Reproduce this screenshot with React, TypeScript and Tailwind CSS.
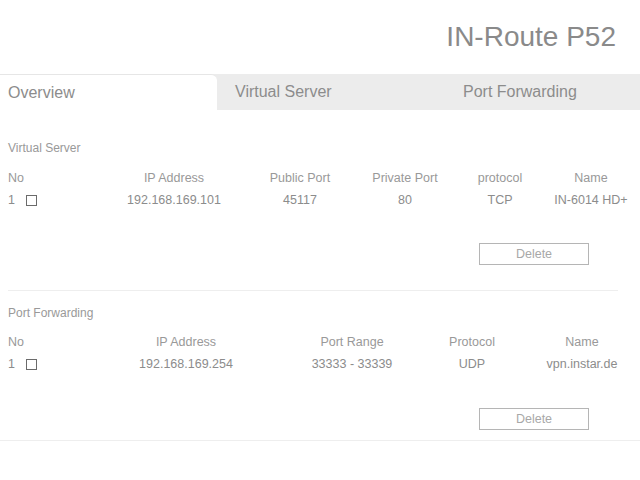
import React from "react"

const vsRows = [
  { no: 1, ip: "192.168.169.101", pub: "45117", priv: "80", proto: "TCP", name: "IN-6014 HD+" },
]

const pfRows = [
  { no: 1, ip: "192.168.169.254", range: "33333 - 33339", proto: "UDP", name: "vpn.instar.de" },
]

const Checkbox = () => (
  <span className="inline-block w-[11px] h-[11px] border border-[#6b6b6b] bg-white" />
)

const DeleteButton = () => (
  <div className="flex justify-end pr-[51px]">
    <button className="w-[110px] h-[22px] border border-[#b5b5b5] bg-white text-[12.5px] text-[#a8a8a8] leading-none">
      Delete
    </button>
  </div>
)

const App = () => {
  const [tab] = React.useState("overview")

  return (
    <div
      className="w-[640px] h-[480px] bg-white text-[#8c8c8c] overflow-hidden"
      style={{ fontFamily: '"Liberation Sans", Arial, sans-serif' }}
    >
      <div className="h-[74px] flex items-center justify-end pr-[24px]">
        <span className="text-[28px] text-[#8a8a8a] leading-none">IN-Route P52</span>
      </div>

      <div className="h-[36px] flex bg-[#ececec] text-[16px]">
        <div
          className={
            "w-[217px] pl-2 flex items-center rounded-tr-[6px] border-t border-[#e6e6e6] " +
            (tab === "overview" ? "bg-white" : "")
          }
        >
          Overview
        </div>
        <div className="w-[228px] pl-[18px] flex items-center">Virtual Server</div>
        <div className="flex-1 pl-[18px] flex items-center">Port Forwarding</div>
      </div>

      <div className="pl-2 text-[12.5px]">
        <div className="mt-[28px] h-[20px] leading-[20px] text-[12px] text-[#999]">Virtual Server</div>
        <div className="mt-[9px] grid grid-cols-[92px_148px_104px_106px_84px_1fr] h-[22px] items-center text-[#999]">
          <div>No</div>
          <div className="text-center">IP Address</div>
          <div className="text-center">Public Port</div>
          <div className="text-center">Private Port</div>
          <div className="text-center">protocol</div>
          <div className="text-center">Name</div>
        </div>
        {vsRows.map((r) => (
          <div key={r.no} className="grid grid-cols-[92px_148px_104px_106px_84px_1fr] h-[22px] items-center">
            <div className="flex items-center gap-[11px]">
              <span>{r.no}</span>
              <Checkbox />
            </div>
            <div className="text-center">{r.ip}</div>
            <div className="text-center">{r.pub}</div>
            <div className="text-center">{r.priv}</div>
            <div className="text-center">{r.proto}</div>
            <div className="text-center">{r.name}</div>
          </div>
        ))}
        <div className="mt-[32px]">
          <DeleteButton />
        </div>
        <div className="mt-[25px] mr-[22px] h-px bg-[#eeeeee]" />

        <div className="mt-[12px] h-[20px] leading-[20px] text-[12px] text-[#999]">Port Forwarding</div>
        <div className="mt-[8px] grid grid-cols-[92px_172px_160px_80px_1fr] h-[22px] items-center text-[#999]">
          <div>No</div>
          <div className="text-center">IP Address</div>
          <div className="text-center">Port Range</div>
          <div className="text-center">Protocol</div>
          <div className="text-center pl-[12px]">Name</div>
        </div>
        {pfRows.map((r) => (
          <div key={r.no} className="grid grid-cols-[92px_172px_160px_80px_1fr] h-[22px] items-center">
            <div className="flex items-center gap-[11px]">
              <span>{r.no}</span>
              <Checkbox />
            </div>
            <div className="text-center">{r.ip}</div>
            <div className="text-center">{r.range}</div>
            <div className="text-center">{r.proto}</div>
            <div className="text-center pl-[12px]">{r.name}</div>
          </div>
        ))}
        <div className="mt-[33px]">
          <DeleteButton />
        </div>
      </div>
      <div className="mt-[10px] h-px bg-[#eeeeee]" />
    </div>
  )
}

export default App
